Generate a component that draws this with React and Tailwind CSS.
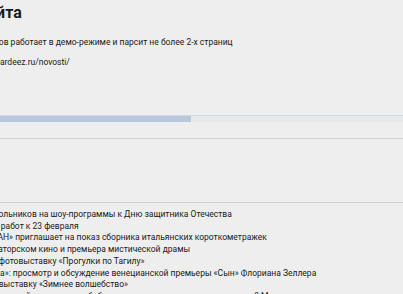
import React from 'react';

const NEWS = [
  'Приглашаем школьников на шоу-программы к Дню защитника Отечества',
  'Показы детских работ к 23 февраля',
  'Кинотеатр «ТИТАН» приглашает на показ сборника итальянских короткометражек',
  'Все новинки в авторском кино и премьера мистической драмы',
  'Приглашаем на фотовыставку «Прогулки по Тагилу»',
  '«Кинопостановка»: просмотр и обсуждение венецианской премьеры «Сын» Флориана Зеллера',
  'Приглашаем на выставку «Зимнее волшебство»',
  'Мастер-класс для детей и взрослых в библиотеке по изготовлению открыток к 8 Марта',
];

export default function App() {
  return (
    <div className="w-[403px] h-[294px] overflow-hidden bg-[#eeeeee] text-[#1a1a1a]" style={{ fontFamily: 'Roboto, sans-serif' }}>
      {/* Header */}
      <div className="-ml-[125px] whitespace-nowrap">
        <h1 className="mt-[3px] text-[16px] leading-[20px] font-bold">Парсеры для сайта</h1>
        <p className="mt-[12px] text-[8.5px] leading-[14px]">Бесплатная веб-версия парсеров работает в демо-режиме и парсит не более 2-х страниц</p>
        <p className="mt-[6px] text-[8.5px] leading-[14px]">Адрес источника: https://www.vardeez.ru/novosti/</p>
      </div>

      <div className="-ml-[66px] whitespace-nowrap">
        {/* Progress */}
        <div className="mt-[46px] h-[7px] bg-[#e6e8ea] border-t border-[#d3dade] flex">
          <div className="w-[257px] h-full bg-[#b8c8dd]" />
        </div>
        <div className="mt-[16px] border-t border-[#d2d2d2]" />
        <div className="mt-[63px] border-t border-[#cfcfcf]" />

        {/* News list */}
        <ul className="mt-[6px] text-[8.5px] leading-[11.7px]">
          {NEWS.map((t) => (
            <li key={t}>{t}</li>
          ))}
        </ul>
      </div>
    </div>
  );
}
